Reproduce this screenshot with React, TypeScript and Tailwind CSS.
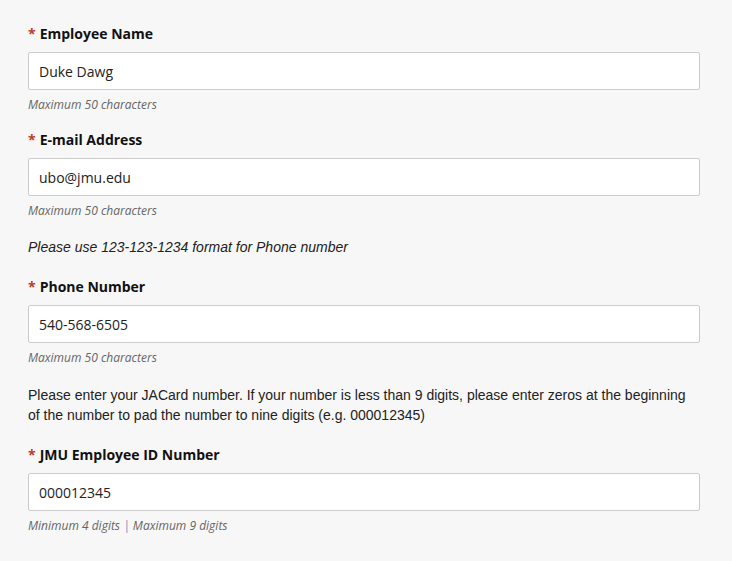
const LABEL_FONT = "font-['Open_Sans','Liberation_Sans',sans-serif]";

function Field({
  label,
  value,
  help,
}: {
  label: string;
  value: string;
  help: React.ReactNode;
}) {
  return (
    <div className="flex flex-col">
      <label className={`${LABEL_FONT} flex h-5 items-center pb-[2px] text-[14px] font-bold text-[#111]`}>
        <span className="mr-[4px] text-[#c0392b]">*</span>
        {label}
      </label>
      <input
        readOnly
        value={value}
        className={`${LABEL_FONT} mt-2 h-[38px] w-full rounded-[2px] border border-[#cccccc] bg-white px-[10px] text-[14px] text-[#222] outline-none`}
      />
      <p className={`${LABEL_FONT} mt-[7px] h-[15px] text-[12px] italic leading-4 text-[#666]`}>{help}</p>
    </div>
  );
}

export default function App() {
  return (
    <div className="min-h-[561px] w-full bg-[#f7f7f7] px-7 pt-6 pb-6 font-['Liberation_Sans',Arial,sans-serif]">
      <div className="w-[672px]">
        <Field label="Employee Name" value="Duke Dawg" help="Maximum 50 characters" />
        <div className="mt-[18px]">
          <Field label="E-mail Address" value="ubo@jmu.edu" help="Maximum 50 characters" />
        </div>
        <p className="mt-[19px] text-[14px] italic leading-5 text-[#222]">
          Please use 123-123-1234 format for Phone number
        </p>
        <div className="mt-5">
          <Field label="Phone Number" value="540-568-6505" help="Maximum 50 characters" />
        </div>
        <p className="mt-5 text-[14px] leading-5 text-[#222]">
          Please enter your JACard number. If your number is less than 9 digits, please enter zeros at the beginning
          of the number to pad the number to nine digits (e.g. 000012345)
        </p>
        <div className="mt-5">
          <Field
            label="JMU Employee ID Number"
            value="000012345"
            help={
              <>
                Minimum 4 digits <span className="text-[#6b8fb8]">|</span> Maximum 9 digits
              </>
            }
          />
        </div>
      </div>
    </div>
  );
}
